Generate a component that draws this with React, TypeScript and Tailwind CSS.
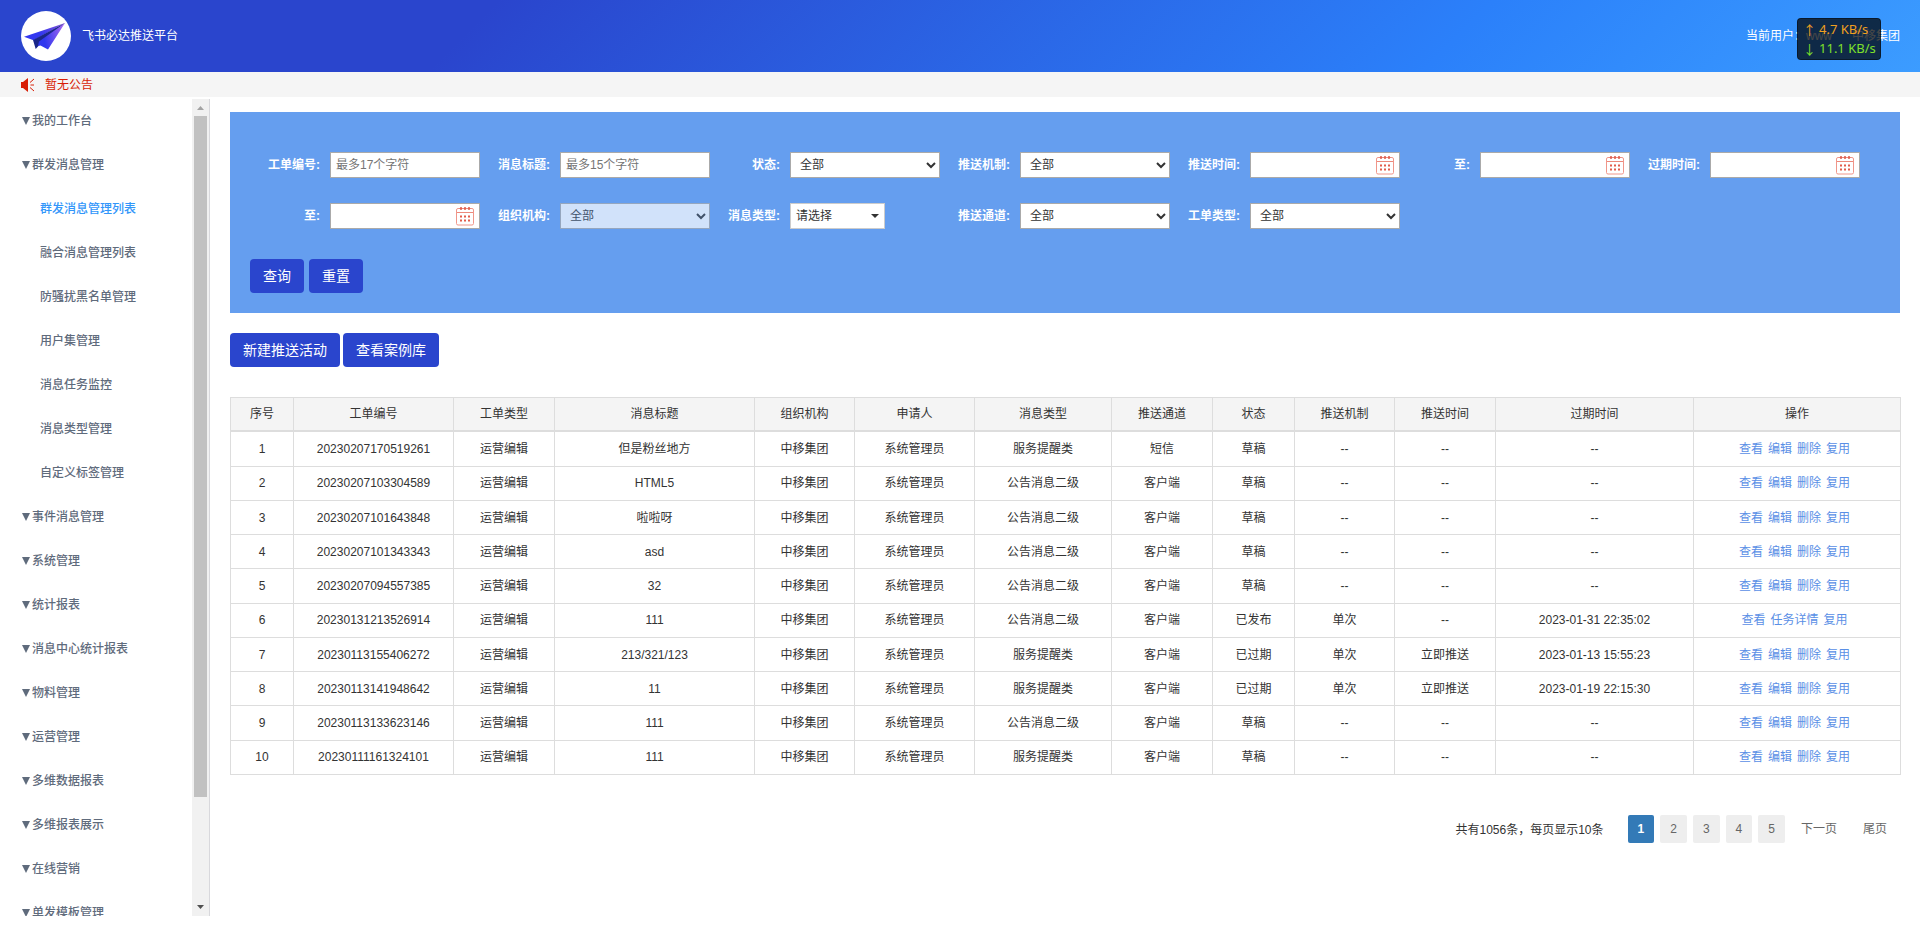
import { useState } from 'react';

type MenuItem = {
    name: string;
    children?: string[];
};

type Order = {
    id: string;
    title: string;
    type: string;
    channel: string;
    status: string;
    mechanism?: string;
    pushTime?: string;
    expireTime?: string;
    actions?: string[];
};

const menu: MenuItem[] = [
    { name: '我的工作台' },
    {
        name: '群发消息管理',
        children: [
            '群发消息管理列表',
            '融合消息管理列表',
            '防骚扰黑名单管理',
            '用户集管理',
            '消息任务监控',
            '消息类型管理',
            '自定义标签管理',
        ],
    },
    { name: '事件消息管理' },
    { name: '系统管理' },
    { name: '统计报表' },
    { name: '消息中心统计报表' },
    { name: '物料管理' },
    { name: '运营管理' },
    { name: '多维数据报表' },
    { name: '多维报表展示' },
    { name: '在线营销' },
    { name: '单发模板管理' },
];

const columns = [
    { label: '序号', width: 'w-[63px]' },
    { label: '工单编号', width: 'w-[160px]' },
    { label: '工单类型', width: 'w-[101px]' },
    { label: '消息标题', width: 'w-[200px]' },
    { label: '组织机构', width: 'w-[100px]' },
    { label: '申请人', width: 'w-[120px]' },
    { label: '消息类型', width: 'w-[137px]' },
    { label: '推送通道', width: 'w-[101px]' },
    { label: '状态', width: 'w-[82px]' },
    { label: '推送机制', width: 'w-[100px]' },
    { label: '推送时间', width: 'w-[101px]' },
    { label: '过期时间', width: 'w-[198px]' },
    { label: '操作', width: 'w-[207px]' },
];

const orders: Order[] = [
    { id: '20230207170519261', title: '但是粉丝地方', type: '服务提醒类', channel: '短信', status: '草稿' },
    { id: '20230207103304589', title: 'HTML5', type: '公告消息二级', channel: '客户端', status: '草稿' },
    { id: '20230207101643848', title: '啦啦呀', type: '公告消息二级', channel: '客户端', status: '草稿' },
    { id: '20230207101343343', title: 'asd', type: '公告消息二级', channel: '客户端', status: '草稿' },
    { id: '20230207094557385', title: '32', type: '公告消息二级', channel: '客户端', status: '草稿' },
    {
        id: '20230131213526914',
        title: '111',
        type: '公告消息二级',
        channel: '客户端',
        status: '已发布',
        mechanism: '单次',
        expireTime: '2023-01-31 22:35:02',
        actions: ['查看', '任务详情', '复用'],
    },
    {
        id: '20230113155406272',
        title: '213/321/123',
        type: '服务提醒类',
        channel: '客户端',
        status: '已过期',
        mechanism: '单次',
        pushTime: '立即推送',
        expireTime: '2023-01-13 15:55:23',
    },
    {
        id: '20230113141948642',
        title: '11',
        type: '服务提醒类',
        channel: '客户端',
        status: '已过期',
        mechanism: '单次',
        pushTime: '立即推送',
        expireTime: '2023-01-19 22:15:30',
    },
    { id: '20230113133623146', title: '111', type: '公告消息二级', channel: '客户端', status: '草稿' },
    { id: '20230111161324101', title: '111', type: '服务提醒类', channel: '客户端', status: '草稿' },
];

const defaultActions = ['查看', '编辑', '删除', '复用'];

const controlClass = 'block h-[26px] w-[150px] border border-[#aaa] bg-white text-xs text-[#333]';
const buttonClass = 'h-[34px] rounded bg-[#2a45cd] px-[13px] text-sm text-white hover:bg-[#2038b0]';

function Logo() {
    return (
        <svg width="50" height="50" viewBox="0 0 50 50" aria-hidden="true">
            <defs>
                <linearGradient id="leftWing" x1="0" y1="1" x2="1" y2="0">
                    <stop offset="0.4" stopColor="#3338f0" />
                    <stop offset="1" stopColor="#8a56d8" />
                </linearGradient>
                <linearGradient id="rightWing" x1="0" y1="0.5" x2="1" y2="0.3">
                    <stop offset="0.2" stopColor="#3037ee" />
                    <stop offset="1" stopColor="#a868f0" />
                </linearGradient>
            </defs>
            <circle cx="25" cy="25" r="25" fill="#fff" />
            <path d="M44 12 3 25.700l9.500 3.600z" fill="url(#leftWing)" />
            <path d="M44 12 12 29l2.700 9 5-5.500z" fill="#1a2688" />
            <path d="M44 12 18 30.500l-1 4.500 2.500-.5L27 38.500z" fill="url(#rightWing)" />
        </svg>
    );
}

function Speaker() {
    return (
        <svg width="14" height="14" viewBox="0 0 14 14" className="text-[#d81e06]" aria-hidden="true">
            <path d="M0 4h2l5-4v14l-5-4H0z" fill="currentColor" />
            <path d="M9 4.500 13 1M9.500 7H13M9 9.500l4 3.500" stroke="currentColor" fill="none" />
        </svg>
    );
}

function CalendarIcon() {
    return (
        <svg
            width="18"
            height="19"
            viewBox="0 0 18 19"
            className="pointer-events-none absolute top-1 right-1.5"
            aria-hidden="true"
        >
            <rect x="0.500" y="1.500" width="17" height="16.500" rx="1.500" fill="none" stroke="#f0968a" />
            <path d="M1 5.500h16M3 1.500h12" stroke="#ec8a7c" />
            <path d="M5 0v3M9 0v3M13 0v3" stroke="#dd5a48" strokeWidth="1.500" />
            <path d="M4 9.500h2m2 0h2m2 0h2M4 13.500h2m2 0h2m2 0h2" stroke="#e25c4b" strokeWidth="2" />
        </svg>
    );
}

function Field({ id, label, children }: { id: string; label: string; children: React.ReactNode }) {
    return (
        <div className="flex w-[230px] items-center">
            <label htmlFor={id} className="w-20 pr-2.5 text-right font-bold text-white">
                {label}:
            </label>
            <div className="relative">{children}</div>
        </div>
    );
}

function TextField({ id, label, placeholder }: { id: string; label: string; placeholder: string }) {
    return (
        <Field id={id} label={label}>
            <input id={id} type="text" placeholder={placeholder} className={`${controlClass} px-[5px] placeholder:text-[#757575]`} />
        </Field>
    );
}

function DateField({ id, label }: { id: string; label: string }) {
    return (
        <Field id={id} label={label}>
            <input id={id} type="text" className={`${controlClass} pr-6 pl-[5px]`} />
            <CalendarIcon />
        </Field>
    );
}

function SelectField({ id, label, disabled }: { id: string; label: string; disabled?: boolean }) {
    return (
        <Field id={id} label={label}>
            <select id={id} disabled={disabled} className={`${controlClass} pl-[5px] disabled:opacity-70`}>
                <option>全部</option>
            </select>
        </Field>
    );
}

export default function App() {
    const [page, setPage] = useState(1);
    const [active, setActive] = useState('群发消息管理列表');

    return (
        <div className="flex h-screen flex-col bg-white font-['Liberation_Sans','Noto_Sans_CJK_SC',sans-serif] text-xs text-[#333]">
            <header className="relative flex h-18 shrink-0 items-center bg-linear-135 from-[#2a45cd] from-25% via-[#2b80fa] via-75% to-[#3c9cff] pr-5 pl-[21px] text-white">
                <Logo />
                <h1 className="ml-[11px]">飞书必达推送平台</h1>
                <div className="ml-auto flex">
                    <span>当前用户：</span>
                    <span>www</span>
                    <span className="ml-5">中移集团</span>
                </div>
                {/* 网速悬浮窗 */}
                <div className="absolute top-[18px] right-[39px] flex h-[42px] w-[84px] flex-col justify-center rounded border border-black/40 bg-black/72 pl-[5px] font-['Noto_Sans',sans-serif] text-[13px] leading-[19px]">
                    <div className="flex gap-[3px] text-[#f0a020]">
                        <span className="font-['Noto_Sans_CJK_SC',sans-serif]">↑</span>
                        <span>4.7 KB/s</span>
                    </div>
                    <div className="flex gap-[3px] text-[#7ee02a]">
                        <span className="font-['Noto_Sans_CJK_SC',sans-serif]">↓</span>
                        <span>11.1 KB/s</span>
                    </div>
                </div>
            </header>

            <div className="flex h-[25px] shrink-0 items-center bg-[#f5f5f5] pl-[21px] text-[#d81e06]">
                <Speaker />
                <span className="ml-2.5">暂无公告</span>
            </div>

            <div className="flex min-h-0 flex-1">
                <aside className="mt-0.5 mb-[13px] flex w-[210px] shrink-0 border-r border-[#d8d8dc]">
                    <nav className="flex-1 overflow-hidden font-medium text-[#5f6b7c]">
                        {menu.map((item) => (
                            <div key={item.name}>
                                <a href="#" className="flex h-11 items-center pl-[22px]">
                                    <svg width="8" height="8" viewBox="0 0 8 8" className="mr-0.5" aria-hidden="true">
                                        <path d="M0 0h8L4 8z" fill="currentColor" />
                                    </svg>
                                    {item.name}
                                </a>
                                {item.children?.map((child) => (
                                    <a
                                        key={child}
                                        href="#"
                                        onClick={() => setActive(child)}
                                        className={`flex h-11 items-center pl-10 ${active === child ? 'text-[#3296fa]' : ''}`}
                                    >
                                        {child}
                                    </a>
                                ))}
                            </div>
                        ))}
                    </nav>
                    <div className="flex w-[17px] flex-col items-center bg-[#f1f1f1]" aria-hidden="true">
                        <svg width="17" height="17" viewBox="0 0 17 17" className="shrink-0">
                            <path d="M5 11h7L8.500 7z" fill="#a3a3a3" />
                        </svg>
                        <div className="w-full flex-1 px-0.5">
                            <div className="h-[87%] bg-[#c1c1c1]" />
                        </div>
                        <svg width="17" height="17" viewBox="0 0 17 17" className="shrink-0">
                            <path d="M5 6h7l-3.500 4z" fill="#505050" />
                        </svg>
                    </div>
                </aside>

                <main className="min-w-0 flex-1 overflow-hidden px-5 pt-[15px]">
                    <form className="bg-[#659eef] px-5 pt-10 pb-5" onSubmit={(e) => e.preventDefault()}>
                        <div className="flex flex-wrap gap-y-[25px]">
                            <TextField id="orderNo" label="工单编号" placeholder="最多17个字符" />
                            <TextField id="title" label="消息标题" placeholder="最多15个字符" />
                            <SelectField id="status" label="状态" />
                            <SelectField id="mechanism" label="推送机制" />
                            <DateField id="pushStart" label="推送时间" />
                            <DateField id="pushEnd" label="至" />
                            <DateField id="expireStart" label="过期时间" />
                            <DateField id="expireEnd" label="至" />
                            <SelectField id="org" label="组织机构" disabled />
                            <Field id="msgType" label="消息类型">
                                <button
                                    id="msgType"
                                    type="button"
                                    className="flex h-[26px] w-[95px] items-center justify-between border border-[#ccc] bg-white px-[5px] text-[#333]"
                                >
                                    请选择
                                    <svg width="8" height="4" viewBox="0 0 8 4" aria-hidden="true">
                                        <path d="M0 0h8L4 4z" fill="currentColor" />
                                    </svg>
                                </button>
                            </Field>
                            <SelectField id="channel" label="推送通道" />
                            <SelectField id="orderType" label="工单类型" />
                        </div>
                        <div className="mt-[30px] flex gap-[5px]">
                            <button type="submit" className={buttonClass}>查询</button>
                            <button type="reset" className={buttonClass}>重置</button>
                        </div>
                    </form>

                    <div className="mt-5 flex gap-[3px]">
                        <button type="button" className={buttonClass}>新建推送活动</button>
                        <button type="button" className={buttonClass}>查看案例库</button>
                    </div>

                    <table className="mt-[30px] h-[378px] w-full table-fixed border-collapse text-center">
                        <thead>
                            <tr className="bg-[#f4f4f4]">
                                {columns.map((col) => (
                                    <th
                                        key={col.label}
                                        className={`${col.width} border border-b-2 border-[#ddd] py-2 font-normal`}
                                    >
                                        {col.label}
                                    </th>
                                ))}
                            </tr>
                        </thead>
                        <tbody>
                            {orders.map((order, i) => (
                                <tr key={order.id} className="*:border *:border-[#ddd]">
                                    <td>{i + 1}</td>
                                    <td>{order.id}</td>
                                    <td>运营编辑</td>
                                    <td>{order.title}</td>
                                    <td>中移集团</td>
                                    <td>系统管理员</td>
                                    <td>{order.type}</td>
                                    <td>{order.channel}</td>
                                    <td>{order.status}</td>
                                    <td>{order.mechanism ?? '--'}</td>
                                    <td>{order.pushTime ?? '--'}</td>
                                    <td>{order.expireTime ?? '--'}</td>
                                    <td>
                                        <div className="flex justify-center text-[#5a8fe6]">
                                            {(order.actions ?? defaultActions).map((action) => (
                                                <a key={action} href="#" className="mr-[5px]">{action}</a>
                                            ))}
                                        </div>
                                    </td>
                                </tr>
                            ))}
                        </tbody>
                    </table>

                    <div className="mt-10 flex items-center justify-end pr-[3px]">
                        <span className="mt-0.5 mr-6">共有1056条，每页显示10条</span>
                        <div className="flex gap-1.5 text-[#666]">
                            {[1, 2, 3, 4, 5].map((n) => (
                                <button
                                    key={n}
                                    type="button"
                                    onClick={() => setPage(n)}
                                    className={`h-7 rounded-xs px-2.5 ${page === n ? 'bg-[#337ab7] font-bold text-white' : 'bg-[#eee]'}`}
                                >
                                    {n}
                                </button>
                            ))}
                            <button type="button" className="h-7 px-2.5">下一页</button>
                            <button type="button" className="h-7 px-2.5">尾页</button>
                        </div>
                    </div>
                </main>
            </div>
        </div>
    );
}
